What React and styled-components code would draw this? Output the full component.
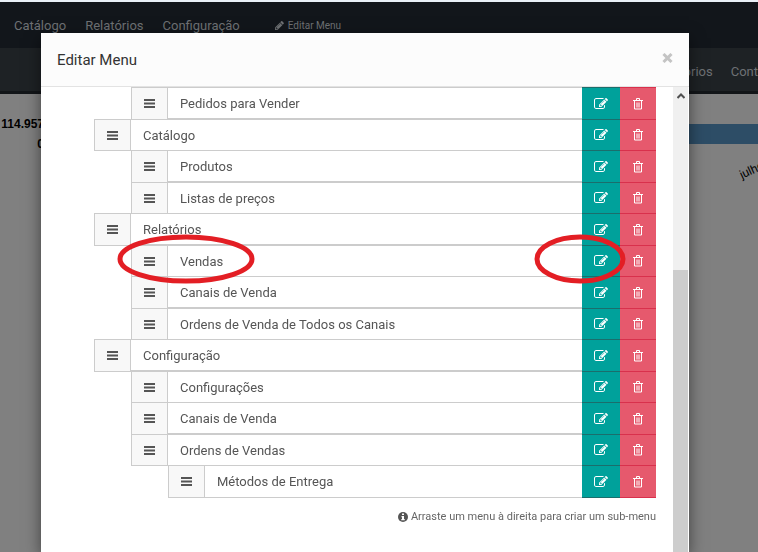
import React from "react";
import styled, { createGlobalStyle, css } from "styled-components";

const GlobalStyle = createGlobalStyle`
  *, *::before, *::after { box-sizing: border-box; }
  body {
    margin: 0;
    overflow: hidden;
    background: #808080;
    font-family: Roboto, "Liberation Sans", sans-serif;
    font-size: 13px;
    color: #555;
  }
  button { font: inherit; padding: 0; margin: 0; border: 0; cursor: pointer; }
  ul { list-style: none; margin: 0; padding: 0; }
`;

const Page = styled.div`
  display: flex;
  flex-direction: column;
  min-height: 100vh;
  overflow: hidden;
`;

const TopBar = styled.nav`
  display: flex;
  align-items: center;
  gap: 19px;
  height: 48px;
  padding: 0 14px;
  border-top: 2px solid #e9f0f7;
  background: #12161b;
`;

const SubBar = styled.nav`
  display: flex;
  align-items: center;
  justify-content: flex-end;
  gap: 18px;
  height: 46px;
  padding-top: 4px;
  background: #1e2225;
  border-bottom: 3px solid #121518;
`;

const NavLink = styled.a`
  display: flex;
  align-items: center;
  gap: 4px;
  color: #6e7174;
  font-size: ${(p) => (p.$small ? "10px" : "13px")};
  margin-left: ${(p) => (p.$small ? "16px" : "0")};
  text-decoration: none;
  white-space: nowrap;
`;

const Backdrop = styled.main`
  display: flex;
  justify-content: space-between;
  padding-top: 20px;
`;

const Totals = styled.div`
  width: 44px;
  font: bold 12px/20px "Liberation Sans", sans-serif;
  color: #000;
  text-align: right;
`;

const Chart = styled.div`
  width: 40%;
  padding-top: 10px;
`;

const ChartBar = styled.div`
  height: 20px;
  background: #2d4d66;
`;

const ChartLabel = styled.div`
  margin-top: 16px;
  text-align: right;
  font: 12px/20px "Liberation Sans", sans-serif;
  color: #000;
  span {
    display: inline-block;
    margin-right: -6px;
    transform: rotate(-25deg);
  }
`;

const Overlay = styled.div`
  position: fixed;
  inset: 0;
  display: flex;
  padding: 33px 69px 0 41px;
`;

const Dialog = styled.section`
  flex: 1;
  display: flex;
  flex-direction: column;
  min-width: 0;
  background: #fff;
  box-shadow: 0 5px 15px rgba(0, 0, 0, 0.5);
`;

const DialogHeader = styled.header`
  display: flex;
  align-items: center;
  justify-content: space-between;
  height: 54px;
  padding: 0 16px;
  background: #fcfcfc;
  border-bottom: 1px solid #e3e3e3;
`;

const Title = styled.h1`
  margin: 0;
  font-size: 15px;
  font-weight: 400;
  color: #333;
`;

const CloseButton = styled.button`
  display: flex;
  margin-bottom: 4px;
  background: none;
  color: #c4c4c4;
`;

const DialogBody = styled.div`
  flex: 1;
  display: grid;
  grid-template-columns: 1fr 15px;
  padding-right: 1px;
  min-height: 0;
`;

const Content = styled.div`
  padding: 0 17px 0 53px;
  min-width: 0;
`;

const Scrollbar = styled.div`
  display: flex;
  flex-direction: column;
  background: #f0f0f0;
`;

const ScrollUp = styled.button`
  display: flex;
  justify-content: center;
  align-items: center;
  height: 18px;
  background: none;
`;

const ScrollThumb = styled.div`
  flex: 1;
  margin-top: 165px;
  background: #cdcdcd;
`;

const MenuRow = styled.li`
  position: relative;
  display: grid;
  grid-template-columns: 36px 1fr 38px 36px;
  height: 32px;
  margin-left: ${(p) => p.$level * 37}px;

  & + & { margin-top: -1px; }
  &:nth-child(odd) { height: 33px; }
`;

const Handle = styled.button`
  display: flex;
  align-items: center;
  justify-content: center;
  background: #f8f8f8;
  border: 1px solid #ccc;
  border-right: 0;
  color: #555;
`;

const Label = styled.span`
  display: flex;
  align-items: center;
  padding-left: 12px;
  border: 1px solid #ccc;
  border-right: 0;
  white-space: nowrap;

  ${MenuRow}:nth-child(odd):not(:last-child) & { border-bottom-width: 2px; }
`;

const ActionButton = styled.button`
  display: flex;
  align-items: center;
  justify-content: center;
  color: #fff;
  ${(p) =>
    p.$danger
      ? css`
          background: #e6596d;
          border: 1px solid #d9304c;
          border-width: 1px 0;
        `
      : css`
          background: #00a19b;
          border: 1px solid #1b6e6c;
          border-width: 1px 0;
        `}
`;

const Hint = styled.p`
  display: flex;
  align-items: center;
  justify-content: flex-end;
  gap: 3px;
  margin: 11px 0 0;
  font-size: 11px;
  line-height: 16px;
  color: #666;
`;

const Mark = styled.svg`
  position: absolute;
  z-index: 1;
  top: -11px;
  ${(p) => (p.$side === "left" ? "left: -14px;" : "right: 30px;")}
  pointer-events: none;
`;

const BarsIcon = () => (
  <svg width="11" height="9" viewBox="0 0 11 9" fill="currentColor" aria-hidden="true">
    <path d="M0 0h11v2H0zM0 3.5h11v2H0zM0 7h11v2H0z" />
  </svg>
);

const EditIcon = () => (
  <svg width="14" height="14" viewBox="0 0 1792 1792" fill="currentColor" aria-hidden="true">
    <path d="M888 1184l116-116-152-152-116 116v56h96v96h56zm440-720q-16-16-33 1l-350 350q-17 17-1 33t33-1l350-350q17-17 1-33zm80 594v190q0 119-84.5 203.5t-203.5 84.5h-832q-119 0-203.5-84.5t-84.5-203.5v-832q0-119 84.5-203.5t203.5-84.5h832q63 0 117 25 15 7 18 23 3 17-9 29l-49 49q-14 14-32 8-23-6-45-6h-832q-66 0-113 47t-47 113v832q0 66 47 113t113 47h832q66 0 113-47t47-113v-126q0-13 9-22l64-64q15-15 35-7t20 29zm-96-738l288 288-672 672h-288v-288zm444 132l-92 92-288-288 92-92q28-28 68-28t68 28l152 152q28 28 28 68t-28 68z" />
  </svg>
);

const TrashIcon = () => (
  <svg width="10" height="12" viewBox="0 0 10 12" fill="none" stroke="currentColor" aria-hidden="true">
    <path d="M3.5 2V.5h3V2M0 2.5h10M1.5 2.5v8.5h7V2.5M4 4.5V9.5M6 4.5V9.5" />
  </svg>
);

const PencilIcon = () => (
  <svg width="9" height="9" viewBox="128 128 1536 1536" fill="currentColor" aria-hidden="true">
    <path d="M491 1536l91-91-235-235-91 91v107h128v128h107zm523-928q0-22-22-22-10 0-17 7l-542 542q-7 7-7 17 0 22 22 22 10 0 17-7l542-542q7-7 7-17zm-54-192l416 416-832 832h-416v-416zm683 96q0 53-37 90l-166 166-416-416 166-165q36-38 90-38 53 0 91 38l235 234q37 39 37 91z" />
  </svg>
);

const InfoIcon = () => (
  <svg width="10" height="10" viewBox="0 0 10 10" aria-hidden="true">
    <circle cx="5" cy="5" r="5" fill="#555" />
    <path d="M4 1.5h2v1.5H4zM3.5 4H6v3h.7v1.3H3.3V7H4V5.2h-.5z" fill="#fff" />
  </svg>
);

const items = [
  ["Pedidos para Vender", 1],
  ["Catálogo", 0],
  ["Produtos", 1],
  ["Listas de preços", 1],
  ["Relatórios", 0],
  ["Vendas", 1, true],
  ["Canais de Venda", 1],
  ["Ordens de Venda de Todos os Canais", 1],
  ["Configuração", 0],
  ["Configurações", 1],
  ["Canais de Venda", 1],
  ["Ordens de Vendas", 1],
  ["Métodos de Entrega", 2],
];

function MenuItem({ name, level, marked }) {
  return (
    <MenuRow $level={level}>
      <Handle aria-label={`Mover ${name}`}><BarsIcon /></Handle>
      <Label>{name}</Label>
      <ActionButton aria-label={`Editar ${name}`}><EditIcon /></ActionButton>
      <ActionButton $danger aria-label={`Excluir ${name}`}><TrashIcon /></ActionButton>
      {marked && (
        <>
          <Mark $side="left" width="138" height="50" fill="none" stroke="#e31e24" strokeWidth="5" aria-hidden="true">
            <ellipse cx="69" cy="25" rx="66" ry="22" />
          </Mark>
          <Mark $side="right" width="92" height="50" fill="none" stroke="#e31e24" strokeWidth="5" aria-hidden="true">
            <ellipse cx="46" cy="25" rx="43" ry="22" />
          </Mark>
        </>
      )}
    </MenuRow>
  );
}

export default function App() {
  return (
    <>
      <GlobalStyle />
      <Page>
        <TopBar>
          <NavLink href="#catalogo">Catálogo</NavLink>
          <NavLink href="#relatorios">Relatórios</NavLink>
          <NavLink href="#configuracao">Configuração</NavLink>
          <NavLink href="#editar" $small><PencilIcon />Editar Menu</NavLink>
        </TopBar>
        <SubBar>
          <NavLink href="#relatorios">Relatórios</NavLink>
          <NavLink href="#cont">Cont</NavLink>
        </SubBar>
        <Backdrop>
          <Totals>
            <div>114.957</div>
            <div>0</div>
          </Totals>
          <Chart>
            <ChartBar />
            <ChartLabel><span>julho</span></ChartLabel>
          </Chart>
        </Backdrop>
      </Page>
      <Overlay>
        <Dialog role="dialog" aria-labelledby="dialog-title">
          <DialogHeader>
            <Title id="dialog-title">Editar Menu</Title>
            <CloseButton aria-label="Fechar">
              <svg width="11" height="10" viewBox="0 0 11 10" stroke="currentColor" strokeWidth="3" aria-hidden="true">
                <path d="M1.5 1l8 8M9.5 1l-8 8" />
              </svg>
            </CloseButton>
          </DialogHeader>
          <DialogBody>
            <Content>
              <ul>
                {items.map(([name, level, marked], i) => (
                  <MenuItem key={i} name={name} level={level} marked={marked} />
                ))}
              </ul>
              <Hint><InfoIcon />Arraste um menu à direita para criar um sub-menu</Hint>
            </Content>
            <Scrollbar>
              <ScrollUp aria-label="Rolar para cima">
                <svg width="8" height="6" viewBox="0 0 8 6" fill="none" stroke="#505050" strokeWidth="2" aria-hidden="true">
                  <path d="M.5 5L4 1.5 7.5 5" />
                </svg>
              </ScrollUp>
              <ScrollThumb />
            </Scrollbar>
          </DialogBody>
        </Dialog>
      </Overlay>
    </>
  );
}
